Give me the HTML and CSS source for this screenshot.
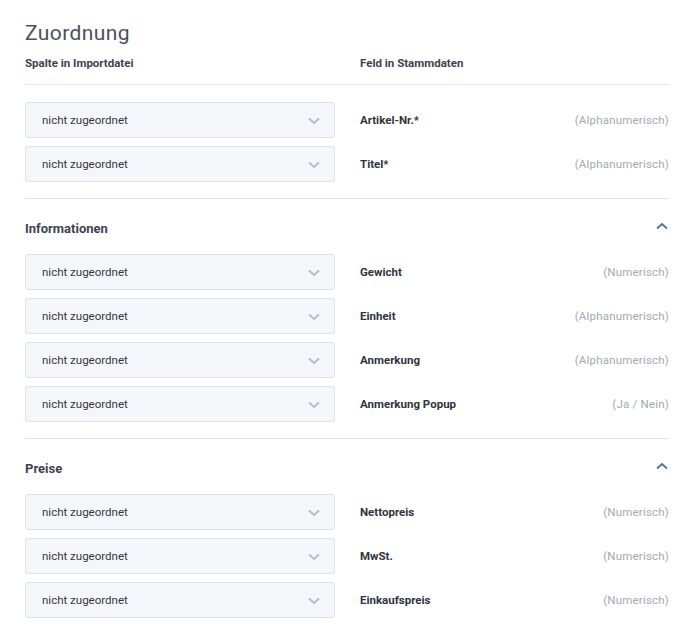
FILE: index.html
```html
<!DOCTYPE html>
<html lang="de">
<head>
<meta charset="utf-8">
<link rel="stylesheet" href="styles.css">
</head>
<body>
<div class="page">
  <h1 class="title">Zuordnung</h1>
  <div class="cols-head">
    <div class="col-left">Spalte in Importdatei</div>
    <div class="col-right">Feld in Stammdaten</div>
  </div>

  <section class="group first">
    <div class="rows">
      <div class="row"><div class="select"><span>nicht zugeordnet</span><svg class="chev" viewBox="0 0 12 8"><path d="M1 1.5 L6 6 L11 1.5"/></svg></div><div class="field"><b>Artikel-Nr.*</b><span class="type">(Alphanumerisch)</span></div></div>
      <div class="row"><div class="select"><span>nicht zugeordnet</span><svg class="chev" viewBox="0 0 12 8"><path d="M1 1.5 L6 6 L11 1.5"/></svg></div><div class="field"><b>Titel*</b><span class="type">(Alphanumerisch)</span></div></div>
    </div>
  </section>

  <section class="group">
    <div class="group-head"><span>Informationen</span><svg class="up" viewBox="0 0 12 8"><path d="M1 6.5 L6 2 L11 6.5"/></svg></div>
    <div class="rows">
      <div class="row"><div class="select"><span>nicht zugeordnet</span><svg class="chev" viewBox="0 0 12 8"><path d="M1 1.5 L6 6 L11 1.5"/></svg></div><div class="field"><b>Gewicht</b><span class="type">(Numerisch)</span></div></div>
      <div class="row"><div class="select"><span>nicht zugeordnet</span><svg class="chev" viewBox="0 0 12 8"><path d="M1 1.5 L6 6 L11 1.5"/></svg></div><div class="field"><b>Einheit</b><span class="type">(Alphanumerisch)</span></div></div>
      <div class="row"><div class="select"><span>nicht zugeordnet</span><svg class="chev" viewBox="0 0 12 8"><path d="M1 1.5 L6 6 L11 1.5"/></svg></div><div class="field"><b>Anmerkung</b><span class="type">(Alphanumerisch)</span></div></div>
      <div class="row"><div class="select"><span>nicht zugeordnet</span><svg class="chev" viewBox="0 0 12 8"><path d="M1 1.5 L6 6 L11 1.5"/></svg></div><div class="field"><b>Anmerkung Popup</b><span class="type">(Ja / Nein)</span></div></div>
    </div>
  </section>

  <section class="group last">
    <div class="group-head"><span>Preise</span><svg class="up" viewBox="0 0 12 8"><path d="M1 6.5 L6 2 L11 6.5"/></svg></div>
    <div class="rows">
      <div class="row"><div class="select"><span>nicht zugeordnet</span><svg class="chev" viewBox="0 0 12 8"><path d="M1 1.5 L6 6 L11 1.5"/></svg></div><div class="field"><b>Nettopreis</b><span class="type">(Numerisch)</span></div></div>
      <div class="row"><div class="select"><span>nicht zugeordnet</span><svg class="chev" viewBox="0 0 12 8"><path d="M1 1.5 L6 6 L11 1.5"/></svg></div><div class="field"><b>MwSt.</b><span class="type">(Numerisch)</span></div></div>
      <div class="row"><div class="select"><span>nicht zugeordnet</span><svg class="chev" viewBox="0 0 12 8"><path d="M1 1.5 L6 6 L11 1.5"/></svg></div><div class="field"><b>Einkaufspreis</b><span class="type">(Numerisch)</span></div></div>
    </div>
  </section>
</div>
</body>
</html>
```

FILE: styles.css
```css
* { box-sizing: border-box; }
html, body { margin: 0; padding: 0; background: #fff; }
body {
  font-family: "Roboto", "Liberation Sans", sans-serif;
  color: #3a3f4c;
}
.page {
  width: 644px;
  margin-left: 25px;
}
.title {
  margin: 0;
  padding-top: 20px;
  font-size: 21px;
  line-height: 26px;
  font-weight: 400;
  color: #4b505c;
  letter-spacing: 0.4px;
}
.cols-head {
  display: flex;
  padding-top: 10px;
  height: 39px;
  font-size: 11.5px;
  font-weight: 700;
  line-height: 14px;
  color: #3e4351;
  border-bottom: 1px solid #e0e3ec;
}
.col-left { width: 335px; }
.group {
  border-bottom: 1px solid #e0e3ec;
  padding-bottom: 16px;
}
.group.first { padding-top: 17px; }
.group.last { border-bottom: none; }
.group-head {
  display: flex;
  justify-content: space-between;
  align-items: center;
  height: 55px;
  padding-top: 4px;
  font-size: 13px;
  font-weight: 700;
  color: #3e4351;
}
.up {
  width: 12px;
  height: 8px;
  margin-right: 1px;
  margin-top: -5px;
  fill: none;
  stroke: #5b7394;
  stroke-width: 2;
}
.rows {
  display: flex;
  flex-direction: column;
  gap: 8px;
}
.row {
  display: flex;
  align-items: center;
  height: 36px;
}
.select {
  width: 310px;
  height: 36px;
  display: flex;
  align-items: center;
  justify-content: space-between;
  padding: 0 14px 0 16px;
  background: #f5f6fa;
  border: 1px solid #dde1ea;
  border-radius: 3px;
  font-size: 11.5px;
  color: #333845;
}
.chev {
  width: 12px;
  height: 8px;
  margin-top: 2px;
  fill: none;
  stroke: #b6bdca;
  stroke-width: 2;
}
.field {
  flex: 1;
  display: flex;
  justify-content: space-between;
  align-items: center;
  margin-left: 25px;
  font-size: 11.5px;
}
.field b {
  font-weight: 700;
  color: #2f3440;
}
.type {
  color: #a3a8b3;
  letter-spacing: 0.2px;
}
```
